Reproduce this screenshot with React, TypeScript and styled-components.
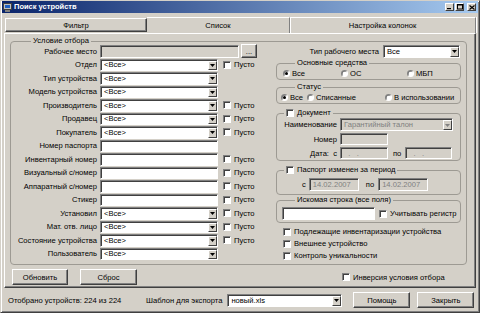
import React from "react";
import styled, { createGlobalStyle, css } from "styled-components";

const Global = createGlobalStyle`
  html, body { margin: 0; padding: 0; background: #d4d0c8; }
  body { font-family: "Liberation Sans", Arial, sans-serif; font-size: 7.6px; color: #000; }
  *, *::before, *::after { box-sizing: border-box; }
`;

const Window = styled.div`
  width: 480px;
  height: 313px;
  overflow: hidden;
  display: flex;
  flex-direction: column;
  background: #d4d0c8;
  border: 1px solid;
  border-color: #d4d0c8 #404040 #404040 #d4d0c8;
  box-shadow: inset 1px 1px #fff, inset -1px -1px #808080;
`;

const TitleBar = styled.div`
  height: 12px;
  margin: 0 1px;
  display: flex;
  align-items: center;
  gap: 2px;
  padding: 0 2px 0 1px;
  background: linear-gradient(to right, #0a246a, #a6caf0);
`;

const TitleText = styled.span`
  flex: 1;
  color: #fff;
  font-weight: bold;
  font-size: 7.5px;
  line-height: 12px;
  white-space: nowrap;
`;

const WinButtons = styled.div`
  display: flex;
  align-items: center;
  gap: 1px;
`;

const WinButton = styled.span<{ $gap?: boolean }>`
  width: 9px;
  height: 8px;
  margin-left: ${(p) => (p.$gap ? "2px" : "0")};
  background: #d4d0c8;
  border: 1px solid;
  border-color: #fff #404040 #404040 #fff;
  display: flex;
  align-items: center;
  justify-content: center;
`;

const Body = styled.div`
  flex: 1;
  display: flex;
  flex-direction: column;
  margin: 4px 3px 0 3px;
`;

const TabBar = styled.div`
  display: flex;
  height: 16px;
`;

const Tab = styled.div<{ $active?: boolean; $w: number }>`
  width: ${(p) => p.$w}px;
  display: flex;
  align-items: center;
  justify-content: center;
  white-space: nowrap;
  ${(p) =>
    p.$active
      ? css`
          margin: 1px 0 1px 1px;
          border: 1px solid;
          border-color: #fff #404040 #404040 #fff;
          box-shadow: inset -1px -1px #808080;
        `
      : css`
          border-top: 1px solid #fff;
          border-right: 1px solid #808080;
          box-shadow: 1px 0 #fff;
        `}
`;

const Panel = styled.div`
  height: 255px;
  display: flex;
  flex-direction: column;
  border: 1px solid;
  border-color: #fff #404040 #404040 #fff;
  box-shadow: inset -1px -1px #808080;
  padding: 3px 8px 3px 5px;
`;

const MainGroup = styled.fieldset`
  margin: 0;
  padding: 0 5px 3px 1px;
  min-width: 0;
  border: 1px solid #9d9a93;
  border-radius: 4px;
  display: flex;
`;

const Legend = styled.legend<{ $ml: number; $lh?: number }>`
  margin-left: ${(p) => p.$ml}px;
  padding: 0 2px;
  line-height: ${(p) => p.$lh ?? 10}px;
  display: flex;
  align-items: center;
  gap: 3px;
  white-space: nowrap;
`;

const LeftGrid = styled.div`
  width: 252px;
  display: grid;
  grid-template-columns: 85px 118px auto;
  grid-auto-rows: 12.5px;
  row-gap: 1px;
  column-gap: 3px;
`;

const Label = styled.span`
  display: flex;
  align-items: center;
  justify-content: flex-end;
  white-space: nowrap;
`;

const Field = styled.div<{ $w?: number; $h?: number; $disabled?: boolean; $ml?: number }>`
  width: ${(p) => (p.$w ? `${p.$w}px` : "100%")};
  height: ${(p) => (p.$h ? `${p.$h}px` : "100%")};
  margin-left: ${(p) => p.$ml ?? 0}px;
  flex: none;
  display: flex;
  align-items: stretch;
  background: ${(p) => (p.$disabled ? "#d4d0c8" : "#fff")};
  border: 1px solid;
  border-color: #808080 #fff #fff #808080;
  box-shadow: inset 1px 1px #404040;
`;

const FieldText = styled.span<{ $gray?: boolean }>`
  flex: 1;
  display: flex;
  align-items: center;
  padding-left: 3px;
  white-space: pre;
  overflow: hidden;
  color: ${(p) => (p.$gray ? "#808080" : "#000")};
`;

const ArrowBtn = styled.span`
  width: 9px;
  margin: 1px 0 0 0;
  flex: none;
  background: #d4d0c8;
  border: 1px solid;
  border-color: #fff #404040 #404040 #fff;
  display: flex;
  align-items: center;
  justify-content: center;
`;

const FieldSpan = styled.div`
  grid-column: 2 / 4;
  display: flex;
  align-items: center;
  gap: 2px;
`;

const Button = styled.div<{ $w: number; $h?: number; $ml?: number }>`
  width: ${(p) => p.$w}px;
  height: ${(p) => p.$h ?? 16}px;
  margin-left: ${(p) => p.$ml ?? 0}px;
  flex: none;
  display: flex;
  align-items: center;
  justify-content: center;
  white-space: nowrap;
  background: #d4d0c8;
  border: 1px solid;
  border-color: #fff #404040 #404040 #fff;
  box-shadow: inset -1px -1px #808080;
`;

const CheckItem = styled.label<{ $ml?: number }>`
  display: flex;
  align-items: center;
  gap: 3px;
  margin-left: ${(p) => p.$ml ?? 0}px;
  white-space: nowrap;
`;

const CheckBox = styled.span`
  width: 8px;
  height: 8px;
  flex: none;
  background: #fff;
  border: 1px solid;
  border-color: #808080 #fff #fff #808080;
  box-shadow: inset 1px 1px #404040;
`;

const RadioItem = styled.label`
  display: flex;
  align-items: center;
  gap: 2px;
  white-space: nowrap;
`;

const RadioDot = styled.span<{ $checked?: boolean }>`
  width: 7px;
  height: 7px;
  flex: none;
  border-radius: 50%;
  background: #fff;
  border: 1px solid;
  border-color: #808080 #fff #fff #808080;
  box-shadow: inset 0.5px 0.5px #404040;
  display: flex;
  align-items: center;
  justify-content: center;
  &::after {
    content: "";
    display: ${(p) => (p.$checked ? "block" : "none")};
    width: 3px;
    height: 3px;
    border-radius: 50%;
    background: #000;
  }
`;

const RightCol = styled.div`
  width: 185px;
  margin-left: 12px;
  display: flex;
  flex-direction: column;
`;

const TypeRow = styled.div`
  height: 12.5px;
  display: flex;
  justify-content: flex-end;
  align-items: stretch;
  gap: 4px;
  padding-right: 1px;
`;

const SubGroup = styled.fieldset<{ $mt: number }>`
  margin: ${(p) => p.$mt}px 0 0 0;
  padding: 0;
  min-width: 0;
  border: 1px solid #9d9a93;
  border-radius: 4px;
`;

const RadioRow = styled.div<{ $cols: string; $pl: number }>`
  height: 11px;
  display: grid;
  grid-template-columns: ${(p) => p.$cols};
  padding-left: ${(p) => p.$pl}px;
  align-items: center;
`;

const DocGrid = styled.div`
  display: grid;
  grid-template-columns: 60px auto;
  grid-template-rows: 13px 12px 12px;
  row-gap: 2px;
  column-gap: 3px;
  padding-bottom: 1px;
`;

const InlineRow = styled.div<{ $pt?: number; $pl?: number }>`
  display: flex;
  align-items: center;
  padding: ${(p) => p.$pt ?? 0}px 0 ${(p) => p.$pt ?? 0}px ${(p) => p.$pl ?? 0}px;
`;

const Word = styled.span<{ $ml?: number; $mr?: number }>`
  margin-left: ${(p) => p.$ml ?? 0}px;
  margin-right: ${(p) => p.$mr ?? 0}px;
  white-space: nowrap;
`;

const CheckList = styled.div`
  margin-top: 3px;
  padding-left: 7px;
  display: flex;
  flex-direction: column;
  gap: 1px;
  & > label {
    height: 11px;
  }
`;

const BottomRow = styled.div`
  margin-top: 4px;
  height: 16px;
  display: flex;
  align-items: center;
`;

const StatusRow = styled.div`
  flex: 1;
  display: flex;
  align-items: center;
  padding-left: 4px;
`;

const StatusText = styled.span`
  width: 138px;
  white-space: nowrap;
`;

const Arrow = ({ gray }: { gray?: boolean }) => (
  <svg width="5" height="3" viewBox="0 0 5 3">
    <polygon points="0,0 5,0 2.5,3" fill={gray ? "#808080" : "#000"} />
  </svg>
);

const Combo = ({ text, w, disabled, h }: { text: string; w?: number; disabled?: boolean; h?: number }) => (
  <Field $w={w} $h={h} $disabled={disabled}>
    <FieldText $gray={disabled}>{text}</FieldText>
    <ArrowBtn>
      <Arrow gray={disabled} />
    </ArrowBtn>
  </Field>
);

const Check = ({ text, ml }: { text: string; ml?: number }) => (
  <CheckItem $ml={ml}>
    <CheckBox />
    {text}
  </CheckItem>
);

type Row = { label: string; kind: "combo" | "text"; empty?: boolean };
const rows: Row[] = [
  { label: "Отдел", kind: "combo", empty: true },
  { label: "Тип устройства", kind: "combo" },
  { label: "Модель устройства", kind: "combo" },
  { label: "Производитель", kind: "combo", empty: true },
  { label: "Продавец", kind: "combo", empty: true },
  { label: "Покупатель", kind: "combo", empty: true },
  { label: "Номер паспорта", kind: "text" },
  { label: "Инвентарный номер", kind: "text", empty: true },
  { label: "Визуальный с/номер", kind: "text", empty: true },
  { label: "Аппаратный с/номер", kind: "text", empty: true },
  { label: "Стикер", kind: "text", empty: true },
  { label: "Установил", kind: "combo", empty: true },
  { label: "Мат. отв. лицо", kind: "combo", empty: true },
  { label: "Состояние устройства", kind: "combo", empty: true },
  { label: "Пользователь", kind: "combo" },
];

const AppIcon = () => (
  <svg width="9" height="9" viewBox="0 0 9 9">
    <rect x="0.5" y="0.5" width="8" height="6" fill="#c0c0c0" stroke="#404040" strokeWidth="1" />
    <rect x="2" y="2" width="5" height="3" fill="#2060c0" />
    <rect x="2" y="7" width="5" height="2" fill="#808080" />
  </svg>
);

export default function App() {
  return (
    <>
      <Global />
      <Window>
        <TitleBar>
          <AppIcon />
          <TitleText>Поиск устройств</TitleText>
          <WinButtons>
            <WinButton>
              <svg width="5" height="6" viewBox="0 0 5 6">
                <rect x="0" y="4" width="4" height="1.2" fill="#000" />
              </svg>
            </WinButton>
            <WinButton>
              <svg width="6" height="6" viewBox="0 0 6 6">
                <rect x="0.5" y="0.5" width="5" height="4.5" fill="none" stroke="#000" strokeWidth="1" />
                <rect x="0" y="0" width="6" height="1.5" fill="#000" />
              </svg>
            </WinButton>
            <WinButton $gap>
              <svg width="6" height="5" viewBox="0 0 6 5">
                <path d="M0.5 0.5 L5.5 4.5 M5.5 0.5 L0.5 4.5" stroke="#000" strokeWidth="1.2" />
              </svg>
            </WinButton>
          </WinButtons>
        </TitleBar>
        <Body>
          <TabBar>
            <Tab $active $w={142}>Фильтр</Tab>
            <Tab $w={143}>Список</Tab>
            <Tab $w={186}>Настройка колонок</Tab>
          </TabBar>
          <Panel>
            <MainGroup>
              <Legend $ml={19} $lh={8}>Условие отбора</Legend>
              <LeftGrid>
                <Label>Рабочее место</Label>
                <FieldSpan>
                  <Field $w={139} $disabled />
                  <Button $w={16} $h={14}>...</Button>
                </FieldSpan>
                {rows.map((r) => (
                  <React.Fragment key={r.label}>
                    <Label>{r.label}</Label>
                    {r.kind === "combo" ? <Combo text="<Все>" /> : <Field />}
                    {r.empty ? <Check text="Пусто" ml={2} /> : <span />}
                  </React.Fragment>
                ))}
              </LeftGrid>
              <RightCol>
                <TypeRow>
                  <Label>Тип рабочего места</Label>
                  <Combo text="Все" w={77} />
                </TypeRow>
                <SubGroup $mt={0.5}>
                  <Legend $ml={18}>Основные средства</Legend>
                  <RadioRow $cols="58px 66px auto" $pl={6}>
                    <RadioItem><RadioDot $checked />Все</RadioItem>
                    <RadioItem><RadioDot />ОС</RadioItem>
                    <RadioItem><RadioDot />МБП</RadioItem>
                  </RadioRow>
                </SubGroup>
                <SubGroup $mt={2}>
                  <Legend $ml={18}>Статус</Legend>
                  <RadioRow $cols="26px 78px auto" $pl={4}>
                    <RadioItem><RadioDot $checked />Все</RadioItem>
                    <RadioItem><RadioDot />Списанные</RadioItem>
                    <RadioItem><RadioDot />В использовании</RadioItem>
                  </RadioRow>
                </SubGroup>
                <SubGroup $mt={4}>
                  <Legend $ml={7}><CheckBox />Документ</Legend>
                  <DocGrid>
                    <Label>Наименование</Label>
                    <Combo text="Гарантийный талон" w={113} disabled />
                    <Label>Номер</Label>
                    <Field $w={48} $disabled />
                    <Label>Дата:&nbsp; с</Label>
                    <InlineRow>
                      <Field $w={48} $disabled><FieldText $gray>{"  .   ."}</FieldText></Field>
                      <Word $ml={5}>по</Word>
                      <Field $w={47} $ml={4} $disabled><FieldText $gray>{"  .   ."}</FieldText></Field>
                    </InlineRow>
                  </DocGrid>
                </SubGroup>
                <SubGroup $mt={4}>
                  <Legend $ml={7}><CheckBox />Паспорт изменен за период</Legend>
                  <InlineRow $pt={3} $pl={25}>
                    <Word>с</Word>
                    <Field $w={50} $h={13} $ml={3} $disabled><FieldText $gray>14.02.2007</FieldText></Field>
                    <Word $ml={7}>по</Word>
                    <Field $w={50} $h={13} $ml={4} $disabled><FieldText $gray>14.02.2007</FieldText></Field>
                  </InlineRow>
                </SubGroup>
                <SubGroup $mt={0}>
                  <Legend $ml={18}>Искомая строка (все поля)</Legend>
                  <InlineRow $pt={2} $pl={5}>
                    <Field $w={93} $h={13} />
                    <Check text="Учитывать регистр" ml={4} />
                  </InlineRow>
                </SubGroup>
                <CheckList>
                  <Check text="Подлежащие инвентаризации устройства" />
                  <Check text="Внешнее устройство" />
                  <Check text="Контроль уникальности" />
                </CheckList>
              </RightCol>
            </MainGroup>
            <BottomRow>
              <Button $w={56} $ml={2}>Обновить</Button>
              <Button $w={57} $ml={12}>Сброс</Button>
              <Check text="Инверсия условия отбора" ml={205} />
            </BottomRow>
          </Panel>
          <StatusRow>
            <StatusText>Отобрано устройств: 224 из 224</StatusText>
            <Word $mr={5}>Шаблон для экспорта</Word>
            <Combo text="новый.xls" w={115} h={13} />
            <Button $w={57} $ml={11}>Помощь</Button>
            <Button $w={57} $ml={7}>Закрыть</Button>
          </StatusRow>
        </Body>
      </Window>
    </>
  );
}
